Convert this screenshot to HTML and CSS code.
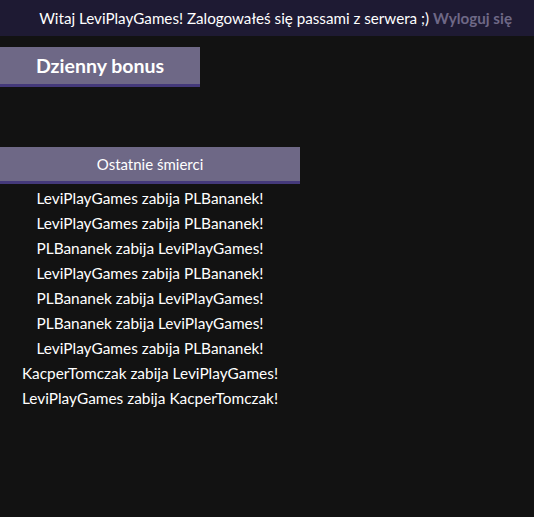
FILE: index.html
```html
<!DOCTYPE html>
<html lang="pl">
<head>
<meta charset="utf-8">
<link rel="stylesheet" href="styles.css">
</head>
<body>
<header class="topbar">
  <span class="welcome">Witaj LeviPlayGames! Zalogowałeś się passami z serwera ;)</span>
  <a class="logout" href="#">Wyloguj się</a>
</header>
<main class="content">
  <div class="bonus">Dzienny bonus</div>
  <section class="deaths">
    <div class="deaths-title">Ostatnie śmierci</div>
    <ul class="deaths-list">
      <li>LeviPlayGames zabija PLBananek!</li>
      <li>LeviPlayGames zabija PLBananek!</li>
      <li>PLBananek zabija LeviPlayGames!</li>
      <li>LeviPlayGames zabija PLBananek!</li>
      <li>PLBananek zabija LeviPlayGames!</li>
      <li>PLBananek zabija LeviPlayGames!</li>
      <li>LeviPlayGames zabija PLBananek!</li>
      <li>KacperTomczak zabija LeviPlayGames!</li>
      <li>LeviPlayGames zabija KacperTomczak!</li>
    </ul>
  </section>
</main>
</body>
</html>
```
FILE: styles.css
```css
html, body {
  margin: 0;
  padding: 0;
  background: #121212;
  color: #ffffff;
  font-family: Lato, "Noto Sans", sans-serif;
}
.topbar {
  height: 36px;
  background: #1e1a33;
  display: flex;
  justify-content: flex-end;
  align-items: center;
  gap: 4px;
  padding-right: 22px;
  font-size: 15.2px;
}
.logout {
  color: #6e6886;
  font-weight: bold;
  text-decoration: none;
}
.content {
  padding-top: 11px;
}
.bonus {
  width: 200px;
  height: 40px;
  box-sizing: border-box;
  background: #6e6886;
  border-bottom: 3px solid #44397a;
  display: flex;
  align-items: center;
  justify-content: center;
  font-weight: bold;
  font-size: 19.5px;
}
.deaths {
  margin-top: 60px;
  width: 300px;
}
.deaths-title {
  height: 37px;
  box-sizing: border-box;
  background: #6e6886;
  border-bottom: 3px solid #44397a;
  display: flex;
  align-items: center;
  justify-content: center;
  font-size: 15px;
}
.deaths-list {
  list-style: none;
  margin: 0;
  padding: 2px 0 0;
  text-align: center;
  font-size: 15.4px;
  line-height: 25px;
}
```
